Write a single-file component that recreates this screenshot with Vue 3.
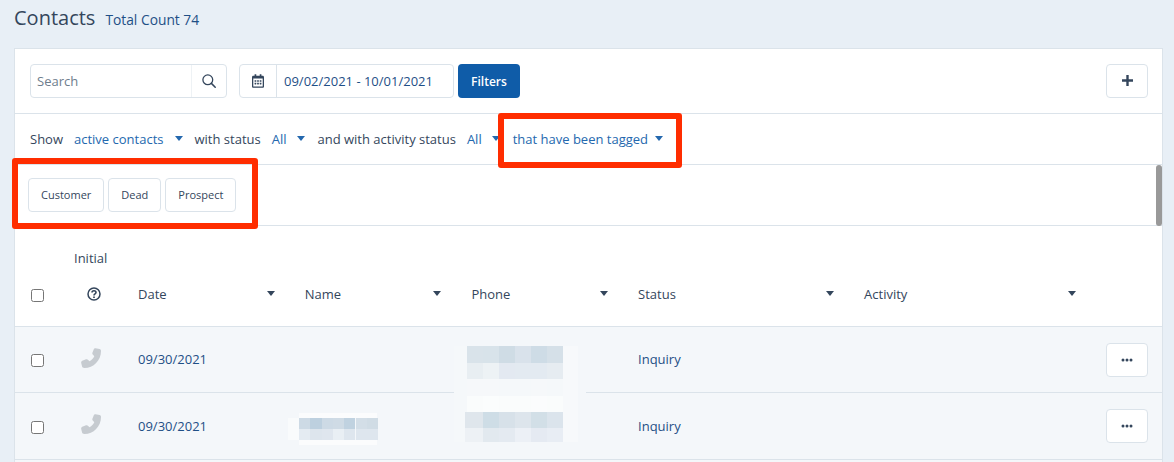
<script setup>
const filters = [
  { label: 'Show', value: 'active contacts', gapLabel: 11, gapCaret: 12, gapAfter: 11 },
  { label: 'with status', value: 'All', gapLabel: 11, gapCaret: 11, gapAfter: 12 },
  { label: 'and with activity status', value: 'All', gapLabel: 11, gapCaret: 10, gapAfter: 13 },
  { label: '', value: 'that have been tagged', gapLabel: 0, gapCaret: 7, gapAfter: 0 }
]
const tags = ['Customer', 'Dead', 'Prospect']
const columns = [
  { name: 'Date', cls: 'col-std' },
  { name: 'Name', cls: 'col-std' },
  { name: 'Phone', cls: 'col-std' },
  { name: 'Status', cls: 'col-wide' },
  { name: 'Activity', cls: 'col-wide' }
]
const rows = [{ date: '09/30/2021', status: 'Inquiry' }, { date: '09/30/2021', status: 'Inquiry' }, { date: '', status: '' }]

const block = (x, y, widths, h, colors) => {
  let cx = x
  return widths.map((w, i) => {
    const c = { left: cx + 'px', top: y + 'px', width: w + 'px', height: h + 'px', background: colors[i] }
    cx += w
    return c
  })
}
const pw = [16, 16, 16, 16, 16, 16]
const nw = [11.3, 11.3, 11.3, 11.3, 11.3, 11.3, 11]
const cells = [
  ...block(454, 380, [132], 24, ['#f4f7fa']),
  ...block(454, 346, [12.7], 96, ['#f5f8fa']),
  ...block(563, 346, [15], 96, ['#f7f9fb']),
  ...block(466.7, 346, pw, 17, ['#d9e3ea', '#d8e3ea', '#cfdce5', '#d9e2eb', '#cedce6', '#d5e0e8']),
  ...block(466.7, 363, pw, 16, ['#e8eef2', '#edf2f5', '#e3e9f1', '#e3eaf1', '#e3eaf1', '#e6ecf1']),
  ...block(466.7, 379, pw, 17, ['#f6f8fa', '#f6f8fa', '#f5f8fa', '#f5f8fa', '#f6f8fa', '#f5f8fa']),
  ...block(466.7, 396, pw, 16, ['#fafcfc', '#fbfdfd', '#fafcfc', '#fafcfc', '#fbfcfd', '#fafcfc']),
  ...block(465, 412, [17.7, 16, 16, 16, 16, 16], 16, ['#dfe6ec', '#cedde6', '#d7e1e9', '#dde5ec', '#d2dfe7', '#dbe4ec']),
  ...block(465, 428, [17.7, 16, 16, 16, 16, 16], 14, ['#edf1f5', '#e2e9ef', '#e4eaf1', '#ecf0f6', '#e5eaf2', '#e8edf4']),
  ...block(288, 418, [11], 22, ['#f9fbfc']),
  ...block(299, 413, [78], 5, ['#fbfcfd']),
  ...block(299, 418, nw, 11, ['#cddae5', '#bdd0df', '#cddae5', '#cfdbe5', '#c0d2e0', '#d3dee7', '#d0dce5']),
  ...block(299, 429, nw, 11, ['#e4ebf2', '#dde5ed', '#dfe6ee', '#e9eff4', '#dee6ee', '#dee6ee', '#dee6ee']),
  ...block(299, 440, [78], 5, ['#fbfcfd'])
]
</script>

<template>
  <div class="page">
    <header class="page-head">
      <h1>Contacts</h1>
      <span class="count">Total Count 74</span>
    </header>

    <section class="card">
      <div class="toolbar">
        <div class="search">
          <span class="search-text">Search</span>
          <span class="search-btn">
            <svg width="14" height="14" viewBox="0 0 14 14" fill="none" stroke="#34465c" stroke-width="1.3">
              <circle cx="5.8" cy="5.8" r="4.9" />
              <path d="M9.4 9.4 13.2 13.2" stroke-linecap="round" stroke-width="1.5" />
            </svg>
          </span>
        </div>
        <div class="dates">
          <span class="cal">
            <svg width="12" height="14" viewBox="0 0 448 512" fill="#34465c">
              <path d="M148 288h-40c-6.600 0-12-5.400-12-12v-40c0-6.600 5.400-12 12-12h40c6.600 0 12 5.400 12 12v40c0 6.600-5.400 12-12 12zm108-12v-40c0-6.600-5.400-12-12-12h-40c-6.600 0-12 5.400-12 12v40c0 6.600 5.400 12 12 12h40c6.600 0 12-5.400 12-12zm96 0v-40c0-6.600-5.400-12-12-12h-40c-6.600 0-12 5.400-12 12v40c0 6.600 5.400 12 12 12h40c6.600 0 12-5.400 12-12zm-96 96v-40c0-6.600-5.400-12-12-12h-40c-6.600 0-12 5.400-12 12v40c0 6.600 5.400 12 12 12h40c6.600 0 12-5.400 12-12zm-96 0v-40c0-6.600-5.400-12-12-12h-40c-6.600 0-12 5.400-12 12v40c0 6.600 5.400 12 12 12h40c6.600 0 12-5.400 12-12zm192 0v-40c0-6.600-5.400-12-12-12h-40c-6.600 0-12 5.400-12 12v40c0 6.600 5.400 12 12 12h40c6.600 0 12-5.400 12-12zm96-260v352c0 26.500-21.500 48-48 48H48c-26.500 0-48-21.500-48-48V112c0-26.500 21.500-48 48-48h48V12c0-6.600 5.400-12 12-12h40c6.600 0 12 5.400 12 12v52h128V12c0-6.600 5.400-12 12-12h40c6.600 0 12 5.400 12 12v52h48c26.500 0 48 21.500 48 48zm-48 346V160H48v298c0 3.300 2.700 6 6 6h340c3.300 0 6-2.700 6-6z" />
            </svg>
          </span>
          <span class="range">09/02/2021 - 10/01/2021</span>
        </div>
        <button class="primary">Filters</button>
        <button class="plus" aria-label="Add">
          <svg width="11" height="11" viewBox="0 0 12 12" fill="#34465c"><path d="M4.700 0h2.600v4.700H12v2.600H7.300V12H4.700V7.300H0V4.700h4.700z" /></svg>
        </button>
      </div>

      <div class="filter-row">
        <template v-for="f in filters" :key="f.value + f.label">
          <span v-if="f.label" class="f-label" :style="{ marginRight: f.gapLabel + 'px' }">{{ f.label }}</span>
          <span class="f-value">{{ f.value }}</span>
          <i class="caret blue" :style="{ marginLeft: f.gapCaret + 'px', marginRight: f.gapAfter + 'px' }"></i>
        </template>
      </div>

      <div class="tag-row">
        <span v-for="t in tags" :key="t" class="tag">{{ t }}</span>
        <span class="scroll-thumb"></span>
      </div>

      <div class="thead">
        <div class="cell-check"><span class="check"></span></div>
        <div class="cell-initial">
          <span class="initial-label">Initial</span>
          <svg class="help" width="14" height="14" viewBox="0 0 14 14" fill="none" stroke="#34465c" stroke-width="1.500">
            <circle cx="7" cy="7" r="6" />
            <path d="M5 5.500C5 4.300 6 3.700 7 3.700s2 .6 2 1.700c0 1.500-2 1.500-2 3" stroke-width="1.600" />
            <path d="M7 9.500v1.500" stroke-width="1.700" />
          </svg>
        </div>
        <div v-for="c in columns" :key="c.name" class="th" :class="c.cls">
          <span>{{ c.name }}</span>
          <i class="caret dark"></i>
        </div>
      </div>

      <div v-for="(r, i) in rows" :key="i" class="tr">
        <div class="cell-check"><span class="check"></span></div>
        <div class="cell-phone">
          <svg width="20" height="20" viewBox="0 0 20 20" fill="#c6cbd0">
            <path d="M14.500 .3 18.600 1C19.500 1.200 20 2 20 3 20 12.500 12.500 20 3.500 20 2 20 1.200 19.200 1 18.300L.2 15C0 14 .5 13.200 1.300 12.800L5 11.300C5.800 11 6.600 11.200 7.200 12L8.500 13.300C10.800 12 12.300 10.300 13.300 8.300L12 6.800C11.300 6.200 11.100 5.500 11.400 4.700L12.800 1.200C13 .5 13.700 .1 14.500 .3Z" />
          </svg>
        </div>
        <div class="td col-std">{{ r.date }}</div>
        <div class="td col-std"></div>
        <div class="td col-std"></div>
        <div class="td col-wide">{{ r.status }}</div>
        <div class="td col-wide"></div>
        <button class="more" aria-label="More">
          <svg width="12" height="4" viewBox="0 0 12 4" fill="#34465c">
            <circle cx="2" cy="2" r="1.500" /><circle cx="6" cy="2" r="1.500" /><circle cx="10" cy="2" r="1.500" />
          </svg>
        </button>
      </div>
    </section>

    <span v-for="(c, i) in cells" :key="i" class="mosaic" :style="c"></span>
    <span class="mark mark-tags"></span>
    <span class="mark mark-filter"></span>
  </div>
</template>

<style scoped>
.page {
  position: relative;
  height: 462px;
  overflow: hidden;
  background: #e8eff6;
  padding: 0 11px 0 14px;
  box-sizing: border-box;
  font-family: "Open Sans", "Liberation Sans", sans-serif;
  font-size: 13px;
  color: #34465c;
}
.page-head {
  display: flex;
  align-items: baseline;
  gap: 10px;
  height: 48px;
  padding-top: 4px;
  box-sizing: border-box;
}
h1 {
  margin: 0;
  font-size: 20px;
  line-height: 27px;
  font-weight: 400;
  color: #34465c;
}
.count {
  font-size: 13.800px;
  color: #1f4f86;
}
.card {
  background: #fff;
  border: 1px solid #dbe3ea;
  border-bottom: 0;
  box-sizing: border-box;
}
.toolbar {
  display: flex;
  align-items: center;
  padding: 0 14px 0 15px;
  border-bottom: 1px solid #dbe3ea;
  height: 63.500px;
}
.search, .dates {
  display: flex;
  height: 34px;
  border: 1px solid #dbe3ea;
  border-radius: 4px;
  box-sizing: border-box;
  align-items: center;
}
.search {
  width: 197px;
  margin-right: 12px;
}
.search-text {
  flex: 1;
  padding-left: 6px;
  color: #6e7d8d;
  height: 100%;
  line-height: 32px;
  border-right: 1px solid #eef2f5;
}
.search-btn {
  width: 34px;
  display: flex;
  justify-content: center;
}
.dates {
  width: 215px;
  margin-right: 4px;
}
.cal {
  width: 36px;
  height: 100%;
  display: flex;
  align-items: center;
  justify-content: center;
  border-right: 1px solid #dbe3ea;
}
.range {
  padding-left: 7px;
  color: #1f4f86;
}
button {
  font: inherit;
  cursor: pointer;
  box-sizing: border-box;
}
.primary {
  width: 62px;
  height: 34px;
  border: 0;
  border-radius: 4px;
  background: #0f5ca8;
  color: #fff;
  font-size: 12px;
  font-weight: 600;
  padding: 1px 0 0;
}
.plus, .more {
  display: flex;
  align-items: center;
  justify-content: center;
  width: 42px;
  height: 34px;
  background: #fff;
  border: 1px solid #dbe3ea;
  border-radius: 4px;
  padding: 0;
}
.plus {
  margin-left: auto;
}
.filter-row {
  display: flex;
  align-items: center;
  height: 50px;
  padding-left: 15px;
  border-bottom: 1px solid #dbe3ea;
}
.f-value {
  color: #2468ae;
}
.caret {
  display: inline-block;
  width: 0;
  height: 0;
  border-left: 4.500px solid transparent;
  border-right: 4.500px solid transparent;
  border-top: 5px solid #2468ae;
}
.caret.dark {
  border-top-color: #34465c;
}
.tag-row {
  position: relative;
  display: flex;
  align-items: center;
  gap: 4px;
  height: 60px;
  padding-left: 13px;
  border-bottom: 1px solid #dbe3ea;
}
.tag {
  display: flex;
  align-items: center;
  height: 34px;
  padding: 0 12px;
  box-sizing: border-box;
  border: 1px solid #dbe3ea;
  border-radius: 4px;
  font-size: 11px;
  color: #34465c;
}
.scroll-thumb {
  position: absolute;
  right: 0;
  top: 0;
  width: 6px;
  height: 61px;
  background: #999;
  border-radius: 3px;
}
.thead, .tr {
  display: flex;
  border-bottom: 1px solid #dbe3ea;
}
.thead {
  height: 100px;
  align-items: flex-end;
}
.cell-check {
  width: 59px;
  flex: none;
  padding-left: 16px;
  box-sizing: border-box;
  display: flex;
}
.check {
  width: 13px;
  height: 13px;
  box-sizing: border-box;
  border: 1px solid #767676;
  border-radius: 2.500px;
  background: #fff;
}
.thead .cell-check {
  padding-bottom: 24px;
}
.cell-initial {
  width: 64px;
  flex: none;
  position: relative;
  height: 100%;
}
.initial-label {
  position: absolute;
  left: 0;
  top: 23px;
  font-size: 13px;
}
.help {
  position: absolute;
  left: 12.500px;
  top: 61px;
}
.th {
  display: flex;
  justify-content: space-between;
  align-items: center;
  padding-bottom: 22px;
  padding-right: 30px;
  box-sizing: border-box;
  height: 42px;
}
.th .caret {
  margin-top: -1px;
}
.col-std {
  width: 166.700px;
  flex: none;
}
.col-wide {
  width: 226px;
  flex: none;
}
.th.col-wide:last-of-type {
  padding-right: 14px;
}
.tr {
  height: 65.500px;
  background: #f4f7fa;
  align-items: center;
}
.tr .check {
  margin-top: 3px;
}
.cell-phone {
  width: 64px;
  flex: none;
  padding-left: 7px;
  box-sizing: border-box;
  display: flex;
  margin-top: -3px;
}
.td {
  color: #1f4f86;
  box-sizing: border-box;
}
.more {
  flex: none;
  margin-left: auto;
  margin-right: 14px;
  margin-top: 1px;
}
.mosaic {
  position: absolute;
}
.mark {
  position: absolute;
  box-sizing: border-box;
  border: 6.500px solid #ff2d00;
  border-radius: 3px;
}
.mark-tags {
  left: 12px;
  top: 158px;
  width: 245.500px;
  height: 71px;
}
.mark-filter {
  left: 498px;
  top: 113px;
  width: 183.500px;
  height: 55px;
}
</style>

<style>
html, body { margin: 0; overflow: hidden; }
</style>
